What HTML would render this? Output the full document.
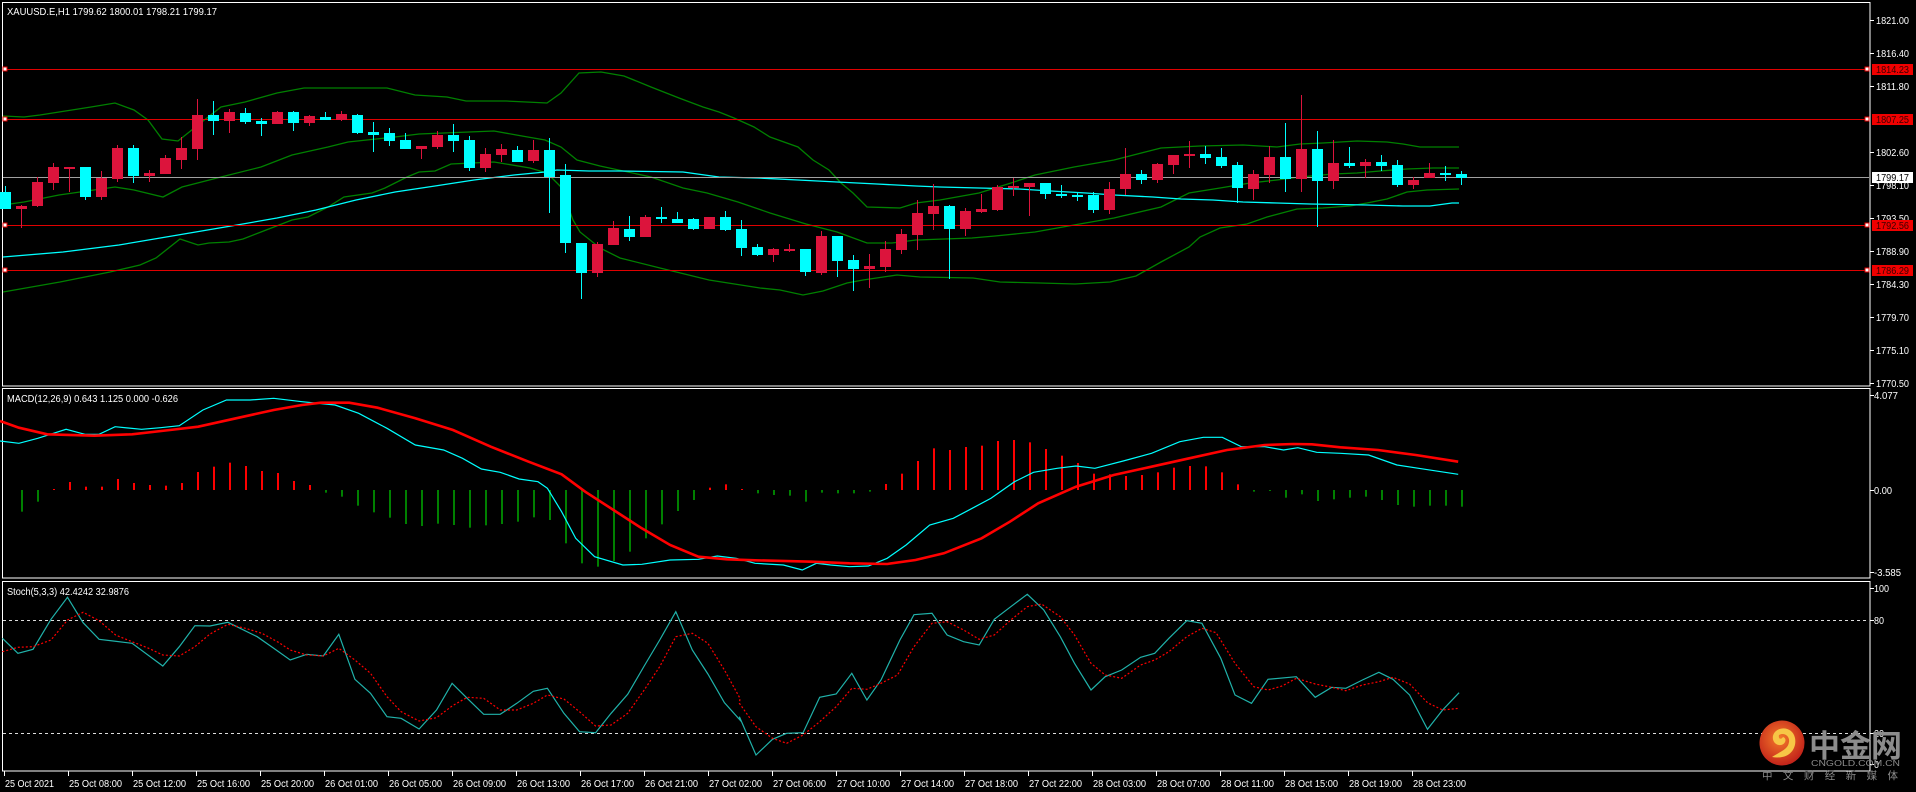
<!DOCTYPE html>
<html><head><meta charset="utf-8"><style>
html,body{margin:0;padding:0;background:#000;width:1916px;height:792px;overflow:hidden}
svg{display:block}
text{font-family:"Liberation Sans","Noto Sans CJK SC",sans-serif}
</style></head><body>
<svg id="s" width="1916" height="792" viewBox="0 0 1916 792" xmlns="http://www.w3.org/2000/svg">
<rect width="1916" height="792" fill="#000"/>
<g id="g"></g>
<g fill="#fff" font-size="10">
<text x="7" y="15" textLength="210" lengthAdjust="spacingAndGlyphs">XAUUSD.E,H1  1799.62 1800.01 1798.21 1799.17</text>
<text x="7" y="402" textLength="171" lengthAdjust="spacingAndGlyphs">MACD(12,26,9) 0.643 1.125 0.000 -0.626</text>
<text x="7" y="595" textLength="122" lengthAdjust="spacingAndGlyphs">Stoch(5,3,3) 42.4242 32.9876</text>
</g>
<g id="ax" fill="#fff" font-size="10"></g>
<g id="lg"></g>
</svg>
<script>
var NS="http://www.w3.org/2000/svg",g=document.getElementById('g'),ax=document.getElementById('ax'),lg=document.getElementById('lg');
function el(p,t,a,txt){var e=document.createElementNS(NS,t);for(var k in a)e.setAttribute(k,a[k]);if(txt!=null)e.textContent=txt;p.appendChild(e);return e;}
function pl(pts,col,w,extra){var a={points:pts.map(function(p){return p[0]+','+p[1]}).join(' '),fill:'none',stroke:col,'stroke-width':w};for(var k in extra)a[k]=extra[k];el(g,'polyline',a);}
// frame
el(g,'rect',{x:2.5,y:2.5,width:1867.5,height:383.5,fill:'none',stroke:'#fff','stroke-width':1});
el(g,'rect',{x:2.5,y:388.5,width:1867.5,height:189.5,fill:'none',stroke:'#fff','stroke-width':1});
el(g,'rect',{x:2.5,y:581.5,width:1867.5,height:189.5,fill:'none',stroke:'#fff','stroke-width':1});
// main bands
var up=[[3,116],[24,117],[40,115],[91,107],[115,103],[134,110],[148,120],[162,139],[178,141],[198,125],[221,107],[245,102],[277,93],[304,88],[387,88],[415,95],[447,97],[466,101],[506,101],[547,103],[561,93],[579,73],[601,72],[624,76],[651,87],[679,98],[703,107],[719,112],[734,118],[754,127],[770,137],[798,147],[813,160],[829,170],[841,183],[853,193],[867,207],[900,208],[916,203],[940,200],[979,193],[1011,183],[1035,175],[1074,167],[1114,160],[1161,148],[1200,146],[1243,145],[1260,146],[1277,147],[1300,144],[1323,143],[1357,141],[1387,142],[1403,144],[1420,147],[1459,147]];
var mid=[[3,205],[24,202],[59,195],[115,187],[134,190],[163,197],[182,187],[221,177],[261,167],[292,155],[328,147],[348,142],[395,137],[419,134],[494,131],[522,136],[545,140],[561,147],[577,160],[600,166],[651,177],[683,188],[707,193],[738,202],[770,213],[806,224],[837,232],[867,243],[892,243],[916,240],[972,238],[995,236],[1035,232],[1074,225],[1114,218],[1161,207],[1189,193],[1220,188],[1250,183],[1277,180],[1300,177],[1333,174],[1357,173],[1380,171],[1407,169],[1433,168],[1459,168]];
var lo=[[3,292],[60,282],[110,272],[140,265],[156,258],[180,239],[198,245],[209,243],[229,242],[243,239],[261,232],[292,220],[308,217],[328,207],[344,197],[372,193],[385,188],[407,177],[419,172],[435,171],[451,164],[494,162],[530,168],[547,173],[561,187],[573,220],[580,232],[600,248],[620,258],[660,268],[709,280],[760,288],[780,290],[803,295],[823,291],[847,283],[863,280],[897,275],[920,277],[973,278],[1000,282],[1040,283],[1075,284],[1110,282],[1136,276],[1161,262],[1189,247],[1200,237],[1220,228],[1247,224],[1267,217],[1297,209],[1323,208],[1350,206],[1367,203],[1387,199],[1407,192],[1427,190],[1459,189]];
pl(up,'#008000',1.3);pl(mid,'#008000',1.3);pl(lo,'#008000',1.3);
var ma=[[3,257],[63,252],[119,245],[178,235],[237,225],[277,218],[316,210],[356,200],[395,192],[435,186],[474,180],[514,175],[545,172],[557,170],[589,171],[620,171],[683,172],[719,177],[758,178],[798,180],[837,182],[877,184],[916,186],[940,187],[979,188],[1019,189],[1051,191],[1086,193],[1114,195],[1153,197],[1181,199],[1213,200],[1243,202],[1277,203],[1310,204],[1367,205],[1403,206],[1430,206],[1452,203],[1459,203]];
pl(ma,'#00ffff',1.3);
// horizontal lines
el(g,'line',{x1:3,y1:177.5,x2:1869,y2:177.5,stroke:'#a0a0a0','stroke-width':1});
[69,119,225,270].forEach(function(y){el(g,'line',{x1:3,y1:y+.5,x2:1869,y2:y+.5,stroke:'#e00000','stroke-width':1});
 el(g,'rect',{x:3,y:y-2,width:4,height:4,fill:'#fff',stroke:'#e00000','stroke-width':1});
 el(g,'rect',{x:1865,y:y-2,width:4,height:4,fill:'#fff',stroke:'#e00000','stroke-width':1});});
// candles
var C=[[1,192,209,186,209],[0,206,209,205,228],[0,182,206,177,207],[0,167,183,163,190],[0,167,168,167,192],[1,167,197,167,200],[0,178,197,171,200],[0,148,179,145,182],[1,148,176,145,183],[0,173,176,170,182],[0,158,174,155,174],[0,148,160,137,169],[0,115,149,99,160],[1,115,121,101,135],[0,112,121,109,133],[1,113,122,108,124],[1,121,124,118,136],[0,112,124,111,124],[1,112,123,111,131],[0,116,123,115,126],[1,117,120,112,120],[0,114,120,111,121],[1,115,133,114,134],[1,132,135,122,152],[1,133,141,128,146],[1,140,149,133,149],[0,146,149,146,159],[0,135,147,131,149],[1,135,141,124,152],[1,140,168,136,171],[0,154,168,148,172],[0,149,155,144,162],[1,150,162,146,162],[0,150,161,140,163],[1,150,177,138,213],[1,175,243,164,253],[1,243,273,243,299],[0,244,273,242,277],
[0,228,245,221,245],[1,229,237,216,241],[0,217,237,215,237],[1,217,219,207,223],[1,219,223,212,223],[1,219,229,218,230],[0,217,229,217,229],[1,217,230,211,231],[1,229,248,220,256],[1,247,255,244,256],[0,249,255,248,262],[0,249,251,244,252],[1,249,272,249,276],[0,236,273,231,275],[1,236,261,236,277],[1,260,269,255,291],[0,266,269,254,288],[0,249,267,241,272],[0,234,250,229,254],[0,213,235,200,250],[0,206,214,184,230],[1,206,229,205,279],[0,211,229,208,236],[0,209,212,194,213],[0,187,210,185,211],[0,186,188,178,196],[0,183,187,183,216],[1,183,194,183,199],[1,194,196,185,198],[1,195,196,192,201],[1,195,210,192,213],[0,189,210,182,214],[0,174,189,148,195],[1,174,180,170,184],[0,164,180,163,183],[0,155,165,155,174],[0,154,156,141,168],
[1,154,158,146,164],[1,157,166,148,168],[1,165,188,162,203],[0,174,189,170,200],[0,157,175,146,183],[1,157,179,123,192],[0,149,179,95,192],[1,149,181,131,227],[0,163,181,140,189],[1,163,166,147,168],[0,162,166,159,178],[1,162,166,155,171],[1,165,185,160,187],[0,180,185,177,189],[0,173,178,163,178],[1,173,175,166,181],[1,174,178,171,185]];
C.forEach(function(c,i){var x=5+16*i,col=c[0]?'#00ffff':'#dc143c';
 el(g,'rect',{x:x,y:c[3],width:1,height:Math.max(1,c[4]-c[3]),fill:col});
 el(g,'rect',{x:x-5,y:c[1],width:11,height:Math.max(2,c[2]-c[1]),fill:col});});
// MACD
var H=[380,350,312,291,305,305,282,294,300,302,294,261,245,233,243,258,264,288,300,323,335,362,382,398,417,423,416,420,428,421,417,410,397,405,475,535,545,528,500,460,418,378,345,308,298,312,325,330,332,350,323,325,325,320,297,266,228,190,195,186,182,168,165,172,192,212,234,266,268,273,270,262,248,243,244,262,298,320,318,338,328,348,343,338,335,345,360,365,362,362,365];
H.forEach(function(z,k){var x=5+16*(k+1),y=385+z/3;var red=z<315;
 el(g,'rect',{x:x,y:Math.min(y,490),width:2,height:Math.max(1,Math.abs(y-490)),fill:red?'#ff0000':'#008000'});});
function mz(a){return a.map(function(p){return [(p[0]/1.0595).toFixed(1),(385+p[1]/3).toFixed(1)]});}
var mc=[[0,168],[20,175],[40,160],[70,133],[90,148],[105,148],[122,125],[150,133],[170,128],[190,122],[215,75],[240,45],[265,45],[290,40],[320,50],[355,60],[380,85],[410,130],[440,180],[470,195],[490,220],[510,252],[530,262],[550,282],[570,290],[580,310],[595,380],[610,460],[630,515],[660,540],[680,538],[710,525],[740,523],[760,513],[780,520],[800,535],[830,540],[850,555],[865,535],[880,540],[900,545],[920,543],[940,520],[960,480],[985,420],[1010,400],[1030,370],[1050,340],[1075,290],[1095,262],[1120,250],[1140,243],[1160,250],[1190,228],[1220,205],[1250,170],[1275,157],[1295,157],[1315,185],[1340,185],[1360,195],[1375,188],[1395,202],[1420,205],[1450,210],[1480,240],[1510,253],[1545,268]];
var mr=[[0,108],[20,128],[50,148],[100,152],[140,148],[180,135],[210,125],[250,100],[290,75],[320,60],[340,53],[370,53],[400,68],[440,100],[480,135],[520,185],[560,230],[595,268],[620,320],[650,375],[680,430],[710,480],[740,515],[770,523],[800,526],[860,530],[900,535],[940,537],[970,525],[1000,505],[1040,460],[1070,410],[1100,355],[1140,305],[1180,270],[1220,245],[1260,220],[1300,195],[1340,180],[1370,177],[1390,178],[1420,187],[1460,195],[1500,210],[1545,230]];
pl(mz(mc),'#00ffff',1.2);pl(mz(mr),'#ff0000',2.6);
// Stoch
el(g,'line',{x1:3,y1:620.5,x2:1869,y2:620.5,stroke:'#ddd','stroke-width':1,'stroke-dasharray':'3,3'});
el(g,'line',{x1:3,y1:733.5,x2:1869,y2:733.5,stroke:'#ddd','stroke-width':1,'stroke-dasharray':'3,3'});
function sz(a,o){return a.map(function(p){return [(o+p[0]/2.119).toFixed(1),(580+p[1]/3).toFixed(1)]});}
var sc1=[[5,175],[38,220],[70,208],[108,118],[143,52],[176,128],[210,178],[240,183],[280,190],[345,258],[380,200],[413,137],[445,138],[483,127],[545,170],[580,205],[615,240],[650,223],[685,228],[718,163],[752,298],[785,340],[820,410],[850,415],[888,447],[925,390],[958,310],[990,355],[1025,403],[1060,403],[1095,370],[1130,334],[1160,325],[1195,400],[1228,455],[1262,458],[1295,400],[1330,343],[1365,258],[1398,180],[1432,95],[1467,210],[1500,282],[1535,368],[1568,420]];
var sr1=[[5,215],[38,202],[70,200],[108,180],[143,120],[176,97],[210,122],[245,165],[280,185],[315,205],[345,225],[380,228],[413,200],[445,162],[483,133],[520,145],[555,160],[590,187],[615,210],[650,225],[685,228],[718,205],[752,240],[785,280],[820,350],[850,395],[888,423],[925,413],[958,378],[990,352],[1025,355],[1060,390],[1095,390],[1130,370],[1160,345],[1195,357],[1228,395],[1262,438],[1295,435],[1330,400],[1365,330],[1398,260],[1432,170],[1467,160],[1500,190],[1535,270],[1568,355]];
var sc2=[[20,410],[55,525],[90,478],[120,460],[155,458],[190,352],[225,342],[258,280],[290,360],[320,300],[360,180],[390,104],[428,100],[460,165],[495,185],[528,195],[560,118],[595,80],[630,43],[665,90],[700,170],[730,250],[765,330],[795,290],[830,270],[870,232],[900,220],[930,175],[968,122],[1000,130],[1040,235],[1070,345],[1105,370],[1140,298],[1200,290],[1240,352],[1275,322],[1305,325],[1340,300],[1375,277],[1405,298],[1440,345],[1478,448],[1510,390],[1545,338]];
var sr2=[[20,370],[55,440],[90,475],[120,490],[155,465],[190,425],[225,380],[258,325],[290,328],[320,310],[355,285],[390,200],[428,130],[460,125],[495,150],[528,178],[560,165],[595,120],[630,80],[660,72],[700,110],[730,165],[765,250],[795,285],[830,295],[870,255],[900,240],[930,215],[968,170],[1000,145],[1030,158],[1070,250],[1110,320],[1140,330],[1170,318],[1200,295],[1240,312],[1275,322],[1305,332],[1340,315],[1375,305],[1405,292],[1440,312],[1478,368],[1510,390],[1545,385]];
pl(sz(sc1,0).concat(sz(sc2,730)),'#20b2aa',1.2);
pl(sz(sr1,0).concat(sz(sr2,730)),'#ff0000',1.2,{'stroke-dasharray':'2,2'});
// right axis labels
function lab(y,t){el(g,'line',{x1:1870,y1:y+.5,x2:1874,y2:y+.5,stroke:'#fff','stroke-width':1});
 el(ax,'text',{x:1876,y:y+4,textLength:33,lengthAdjust:'spacingAndGlyphs'},t);}
[[20,'1821.00'],[53,'1816.40'],[86,'1811.80'],[152,'1802.60'],[185,'1798.10'],[218,'1793.50'],[251,'1788.90'],[284,'1784.30'],[317,'1779.70'],[350,'1775.10'],[383,'1770.50']].forEach(function(a){lab(a[0],a[1]);});
[[69,'1814.23'],[119,'1807.25'],[225,'1792.56'],[270,'1786.29']].forEach(function(a){
 el(ax,'rect',{x:1872,y:a[0]-5,width:41,height:11,fill:'#f00000'});
 el(ax,'text',{x:1876,y:a[0]+4,fill:'#3a0000',textLength:33,lengthAdjust:'spacingAndGlyphs'},a[1]);});
el(ax,'rect',{x:1872,y:172,width:41,height:11,fill:'#fff'});
el(ax,'text',{x:1876,y:181,fill:'#000',textLength:33,lengthAdjust:'spacingAndGlyphs'},'1799.17');
function lab2(y,t,w){el(g,'line',{x1:1870,y1:y+.5,x2:1874,y2:y+.5,stroke:'#fff','stroke-width':1});
 el(ax,'text',{x:1874,y:y+4,textLength:w,lengthAdjust:'spacingAndGlyphs'},t);}
lab2(395,'4.077',24);lab2(490,'0.00',18);lab2(572,'-3.585',27);
lab2(588,'100',15);lab2(620,'80',10);lab2(733,'20',10);lab2(764,'0',5);
// time axis
var T=['25 Oct 2021','25 Oct 08:00','25 Oct 12:00','25 Oct 16:00','25 Oct 20:00','26 Oct 01:00','26 Oct 05:00','26 Oct 09:00','26 Oct 13:00','26 Oct 17:00','26 Oct 21:00','27 Oct 02:00','27 Oct 06:00','27 Oct 10:00','27 Oct 14:00','27 Oct 18:00','27 Oct 22:00','28 Oct 03:00','28 Oct 07:00','28 Oct 11:00','28 Oct 15:00','28 Oct 19:00','28 Oct 23:00'];
T.forEach(function(t,k){var x=4+64*k;el(g,'line',{x1:x+.5,y1:771,x2:x+.5,y2:776,stroke:'#fff','stroke-width':1});
 el(ax,'text',{x:x+1,y:787,textLength:k?53:49,lengthAdjust:'spacingAndGlyphs'},t);});
// logo
var d=el(lg,'defs',{});var rg=el(d,'radialGradient',{id:'rg',cx:'0.45',cy:'0.4',r:'0.6'});
el(rg,'stop',{offset:'0','stop-color':'#f47a2a'});el(rg,'stop',{offset:'1','stop-color':'#c2231a'});
el(lg,'circle',{cx:1782,cy:743,r:22.5,fill:'url(#rg)'});
el(lg,'path',{d:'M1772 757 C1790 760 1797 748 1795 738 C1793 728 1782 726 1776 731 C1770 736 1773 746 1781 745 C1786 744 1787 738 1783 737 C1781 740 1778 739 1779 735 C1784 732 1790 736 1789 742 C1788 750 1779 752 1772 757 Z',fill:'#f7c646'});
el(lg,'text',{x:1809,y:757,'font-size':31,'font-weight':'bold',fill:'#8c8c8c',textLength:93,lengthAdjust:'spacingAndGlyphs'},'中金网');
el(lg,'text',{x:1811,y:766,'font-size':8.5,fill:'#8c8c8c',textLength:89,lengthAdjust:'spacingAndGlyphs'},'CNGOLD.COM.CN');
el(lg,'text',{x:1762,y:779,'font-size':10.5,fill:'#8c8c8c',textLength:136,lengthAdjust:'spacing'},'中 文 财 经 新 媒 体');
</script>
</body></html>
